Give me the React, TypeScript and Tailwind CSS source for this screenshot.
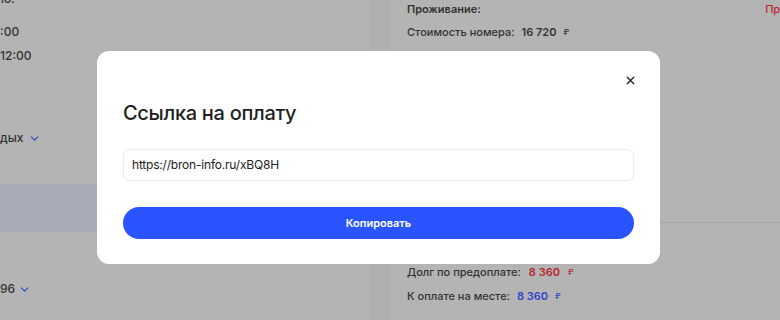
import { X, ChevronDown } from 'lucide-react';

const font = { fontFamily: 'Inter, "Noto Sans", sans-serif' };

export default function App() {
  return (
    <div className="relative w-[780px] h-[320px] overflow-hidden bg-[#b4b4b4] text-[#333]" style={font}>
      {/* dimmed booking page underneath */}
      <div className="flex h-full">
        <div className="w-[370px] h-full overflow-hidden text-[12px] font-medium">
          <div className="-mt-[9px] leading-[16px]">
            <div className="h-[16px] -ml-[6px]">ую:</div>
            <div className="mt-[17px] h-[16px]">:00</div>
            <div className="mt-[8px] h-[16px]">12:00</div>
          </div>
          <div className="mt-[66px] flex items-center gap-[4px] leading-[16px]">
            <span>дых</span>
            <ChevronDown className="w-[13px] h-[13px] text-[#2c46c8]" strokeWidth={2} />
          </div>
          <div className="mt-[38px] h-[48px] bg-[#a9abb8]" />
          <div className="mt-[49px] flex items-center gap-[3px] leading-[16px]">
            <span>96</span>
            <ChevronDown className="w-[13px] h-[13px] text-[#2c46c8]" strokeWidth={2} />
          </div>
        </div>
        <div className="w-[20px] h-full bg-[#b0b0b0]" />
        <div className="flex-1 h-full text-[11px] font-medium overflow-hidden">
          <div className="px-[17px] pt-[1px] leading-[16px]">
            <div className="flex justify-between">
              <span className="font-semibold">Проживание:</span>
              <span className="text-[#b8282c] -mr-[68px]">Предоплата</span>
            </div>
            <div className="mt-[7px] flex items-center gap-[7px]">
              <span>Стоимость номера:</span>
              <span className="font-semibold">16 720</span>
              <span className="text-[8px]">₽</span>
            </div>
          </div>
          <div className="mt-[182px] border-t border-[#a6a6a6]" />
          <div className="px-[17px] pt-[41px] leading-[16px]">
            <div className="flex items-center gap-[8px]">
              <span>Долг по предоплате:</span>
              <span className="font-semibold text-[#b8282c]">8 360</span>
              <span className="text-[8px] text-[#b8282c]">₽</span>
            </div>
            <div className="mt-[8px] flex items-center gap-[7px]">
              <span>К оплате на месте:</span>
              <span className="font-semibold text-[#2c46c8]">8 360</span>
              <span className="text-[8px] text-[#2c46c8]">₽</span>
            </div>
          </div>
        </div>
      </div>

      {/* modal */}
      <div className="absolute left-[97px] top-[51px] w-[563px] h-[213px] bg-white rounded-[12px] px-[26px] pt-[20px]">
        <div className="flex justify-end">
          <button className="w-[18px] h-[18px] flex items-center justify-center text-[#222] -mr-[5px]">
            <X className="w-[13px] h-[13px]" strokeWidth={2.5} />
          </button>
        </div>
        <h2 className="mt-[10px] text-[20px] leading-[28px] font-medium text-[#1f1f1f] tracking-[-0.3px]">Ссылка на оплату</h2>
        <div className="mt-[22px] h-[32px] border border-[#ebebeb] rounded-[6px] px-[8px] flex items-center text-[12px] tracking-[-0.2px] text-[#222]">
          https://bron-info.ru/xBQ8H
        </div>
        <button className="mt-[26px] w-full h-[32px] rounded-full bg-[#2954ff] text-white text-[11px] font-semibold">
          Копировать
        </button>
      </div>
    </div>
  );
}
